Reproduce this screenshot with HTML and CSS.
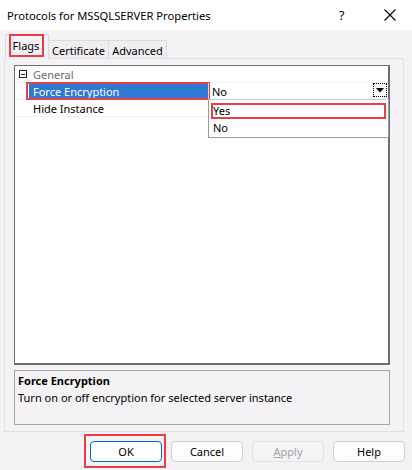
FILE: index.html
```html
<!DOCTYPE html>
<html>
<head>
<meta charset="utf-8">
<link rel="stylesheet" href="styles.css">
</head>
<body>
<div class="dialog">
  <div class="titlebar">
    <span class="title">Protocols for MSSQLSERVER Properties</span>
    <span class="help-q">?</span>
    <svg class="close" width="12" height="12" viewBox="0 0 12 12"><path d="M0.5 0.5 L11.5 11.5 M11.5 0.5 L0.5 11.5" stroke="#000" stroke-width="1.1" fill="none"/></svg>
  </div>
  <div class="tabs">
    <div class="tab active"><span class="mark mark-tab"></span>Flags</div>
    <div class="tab t-cert">Certificate</div>
    <div class="tab t-adv">Advanced</div>
  </div>
  <div class="panel">
    <div class="grid">
      <div class="row cat">
        <div class="gutter"><span class="minus"></span></div>
        <div class="label cat-label">General</div>
      </div>
      <div class="row">
        <div class="gutter"></div>
        <div class="label selected"><span class="mark mark-row"></span>Force Encryption</div>
        <div class="value">No<span class="ddbtn"><svg width="8" height="5" viewBox="0 0 8 5"><path d="M0 0 H8 L4 4.5 Z" fill="#000"/></svg></span>
          <div class="droplist">
            <div class="opt"><span class="mark mark-opt"></span>Yes</div>
            <div class="opt">No</div>
          </div>
        </div>
      </div>
      <div class="row">
        <div class="gutter"></div>
        <div class="label">Hide Instance</div>
        <div class="value"></div>
      </div>
    </div>
    <div class="desc">
      <div class="desc-title">Force Encryption</div>
      <div class="desc-text">Turn on or off encryption for selected server instance</div>
    </div>
  </div>
  <div class="buttons">
    <button class="btn primary"><span class="mark mark-btn"></span>OK</button>
    <button class="btn">Cancel</button>
    <button class="btn disabled"><u>A</u>pply</button>
    <button class="btn">Help</button>
  </div>
</div>
</body>
</html>
```

FILE: styles.css
```css
* { box-sizing: border-box; }
html, body { margin: 0; padding: 0; }
body {
  width: 412px;
  height: 470px;
  background: #f5f2f5;
  font-family: "Noto Sans", "Open Sans", sans-serif;
  font-size: 11px;
  color: #000;
  overflow: hidden;
}
.dialog { display: flex; flex-direction: column; height: 470px; }

.titlebar {
  height: 30px;
  background: #ffffff;
  display: flex;
  align-items: center;
  padding-left: 7px;
}
.title { flex: 1; font-size: 11.2px; }
.help-q { width: 10px; margin-right: 35px; font-size: 12.5px; }
.close { margin-right: 16px; }

.tabs {
  display: flex;
  align-items: flex-end;
  height: 25px;
  margin-top: 3px;
  padding-left: 5px;
  position: relative;
  z-index: 2;
}
.tab {
  height: 18px;
  border: 1px solid #dcdadc;
  border-bottom: none;
  background: #f0eef0;
  display: flex;
  align-items: center;
  justify-content: center;
  line-height: 1;
  margin-left: -1px;
  padding-top: 1px;
}
.t-cert { width: 61px; }
.t-adv { width: 59px; }
.tab.active {
  width: 44px;
  height: 25px;
  background: #f5f2f5;
  margin-bottom: -1px;
  margin-left: 0;
  padding: 0 2px 4px 0;
  position: relative;
}

.mark { position: absolute; border: 2px solid #ea3d45; pointer-events: none; }
.mark-tab { left: 3px; right: 4px; top: -1px; bottom: 2px; }
.mark-row { left: -3px; right: -2px; top: -1px; bottom: -1px; }
.mark-opt { left: 2px; right: 2px; top: 1px; bottom: 0; }
.mark-btn { left: -7px; right: -5px; top: -8px; bottom: -7px; }

.panel {
  margin-left: 4px;
  width: 400px;
  height: 374px;
  border: 1px solid #e2dfe2;
  padding: 6px 0 0 9px;
  display: flex;
  flex-direction: column;
  gap: 5px;
}
.grid {
  width: 376px;
  height: 300px;
  background: #ffffff;
  border: 1px solid #6e6e6e;
  border-right-width: 2px;
  border-bottom-width: 2px;
}
.row {
  display: flex;
  height: 17px;
  border-bottom: 1px solid #f3f3f3;
}
.gutter {
  width: 14px;
  display: flex;
  align-items: center;
  justify-content: center;
  padding-left: 2px;
}
.minus {
  width: 8px; height: 8px;
  border: 1px solid #222;
  position: relative;
}
.minus::after {
  content: "";
  position: absolute;
  left: 1px; right: 1px; top: 2.5px;
  height: 1px;
  background: #222;
}
.label {
  width: 179px;
  padding-left: 4px;
  display: flex;
  align-items: center;
  position: relative;
}
.cat-label { color: #6d6d6d; }
.selected { background: #2d79d4; color: #fff; }
.value {
  flex: 1;
  border-left: 1px solid #d8d8d8;
  padding-left: 3px;
  display: flex;
  align-items: center;
  position: relative;
}
.ddbtn {
  position: absolute;
  right: 1px;
  top: 0;
  width: 14px;
  height: 14px;
  border: 1px dotted #000;
  display: flex;
  align-items: center;
  justify-content: center;
  background: #f8f8f8;
}
.droplist {
  position: absolute;
  left: -1px;
  top: 16px;
  width: 181px;
  height: 39px;
  background: #fff;
  border: 1px solid #9a9a9a;
  border-top-color: #c8c8c8;
  padding-top: 2px;
  z-index: 3;
}
.opt {
  height: 17px;
  padding-left: 4px;
  display: flex;
  align-items: center;
  position: relative;
}

.desc {
  width: 376px;
  height: 55px;
  border: 1px solid #a7a5a7;
  padding: 1px 0 0 3px;
}
.desc-title { font-weight: bold; line-height: 17px; }
.desc-text { line-height: 17px; }

.buttons {
  display: flex;
  justify-content: flex-end;
  gap: 9px;
  padding-right: 7px;
  margin-top: 9px;
}
.btn {
  width: 72px;
  height: 21px;
  background: #fdfdfd;
  border: 1px solid #cfcdcf;
  border-radius: 4px;
  font-family: inherit;
  font-size: 11px;
  color: #000;
  padding: 0;
  position: relative;
}
.btn.primary { border-color: #0067c0; }
.btn.disabled { color: #a2a0a2; background: #f5f3f5; border-color: #e2e0e2; }
```
